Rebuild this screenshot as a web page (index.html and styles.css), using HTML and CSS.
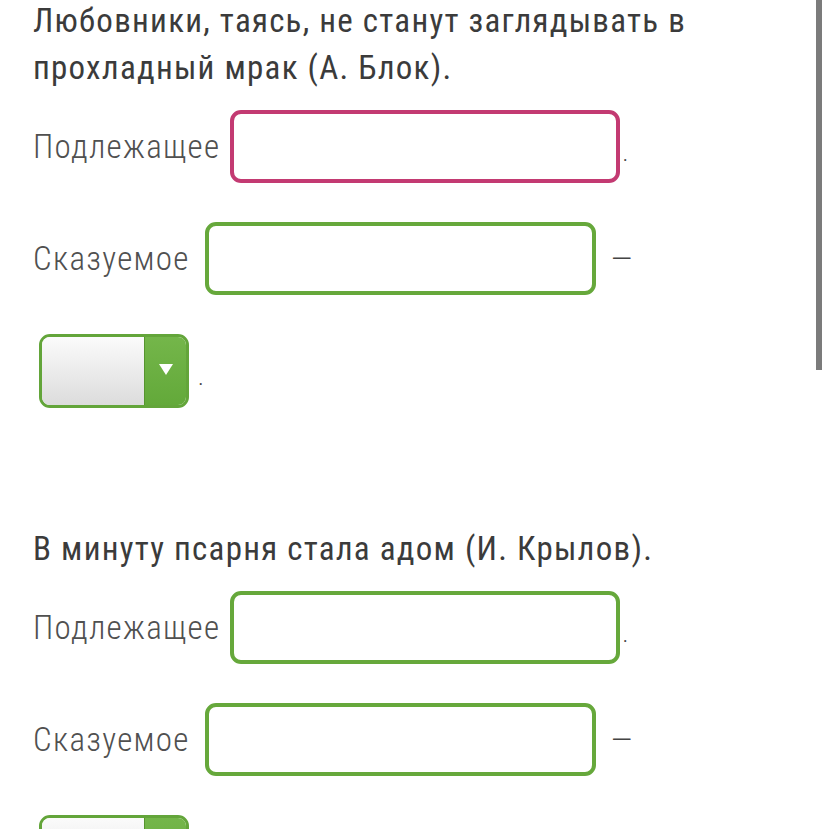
FILE: index.html
```html
<!DOCTYPE html>
<html lang="ru">
<head>
<meta charset="utf-8">
<title>Задание</title>
<link rel="stylesheet" href="styles.css">
</head>
<body>
<div class="page">
  <section class="task">
    <p class="sentence first">Любовники, таясь, не станут заглядывать в прохладный мрак (А. Блок).</p>
    <div class="row">
      <span class="label">Подлежащее</span>
      <span class="box box-pink sub"></span>
      <span class="tail dot">.</span>
    </div>
    <div class="row">
      <span class="label">Сказуемое</span>
      <span class="box pred"></span>
      <span class="tail dash">—</span>
    </div>
    <div class="row">
      <span class="select">
        <span class="select-field"></span>
        <span class="select-btn"><span class="arrow"></span></span>
      </span>
      <span class="tail sdot">.</span>
    </div>
  </section>
  <section class="task second">
    <p class="sentence">В минуту псарня стала адом (И. Крылов).</p>
    <div class="row">
      <span class="label">Подлежащее</span>
      <span class="box sub"></span>
      <span class="tail dot">.</span>
    </div>
    <div class="row">
      <span class="label">Сказуемое</span>
      <span class="box pred"></span>
      <span class="tail dash">—</span>
    </div>
    <div class="row">
      <span class="select">
        <span class="select-field"></span>
        <span class="select-btn"><span class="arrow"></span></span>
      </span>
    </div>
  </section>
</div>
<div class="scrollbar"></div>
</body>
</html>
```
FILE: styles.css
```css
html, body {
  margin: 0;
  padding: 0;
  background: #ffffff;
  overflow: hidden;
}
body {
  font-family: "Roboto Condensed", Roboto, "Liberation Sans", sans-serif;
  color: #3d3d3d;
}
.page {
  padding: 0 0 0 33px;
  margin-top: -3px;
}
.task {
  display: flex;
  flex-direction: column;
  gap: 39px;
}
.second {
  margin-top: 118px;
}
.sentence {
  margin: 0 0 -20px 0;
  font-size: 33px;
  line-height: 47px;
  font-weight: 400;
  letter-spacing: 1.25px;
  color: #3b3b3b;
  width: 700px;
}
.row {
  display: flex;
  align-items: center;
  height: 73px;
}
.label {
  font-size: 33px;
  font-weight: 300;
  letter-spacing: 1.3px;
  color: #505050;
}
.box {
  box-sizing: border-box;
  height: 73px;
  width: 390px;
  border: 4px solid #66a83b;
  border-radius: 11px;
  background: #fff;
}
.box-pink {
  border-color: #c33a72;
}
.sub { margin-left: 10px; }
.pred { margin-left: 15px; width: 391px; }
.tail {
  font-size: 33px;
  font-weight: 300;
  color: #444;
}
.dot {
  font-size: 24px;
  margin-left: 2px;
  align-self: flex-end;
  margin-bottom: 16px;
}
.dash {
  margin-left: 15px;
  font-size: 32px;
}
.select {
  box-sizing: border-box;
  display: flex;
  margin-left: 6px;
  width: 150px;
  height: 74px;
  border: 3px solid #63a53a;
  border-radius: 11px;
  overflow: hidden;
}
.select-field {
  flex: 1;
  background: linear-gradient(#fbfbfb, #dcdcdc);
}
.select-btn {
  width: 41px;
  display: flex;
  align-items: center;
  justify-content: center;
  background: linear-gradient(#74b64a, #63a93a);
  border-left: 1px solid #56952f;
}
.arrow {
  width: 0;
  height: 0;
  border-left: 7px solid transparent;
  border-right: 7px solid transparent;
  border-top: 11px solid #ffffff;
  margin-top: -2px;
}
.sdot {
  font-size: 24px;
  margin-left: 9px;
  align-self: flex-end;
  margin-bottom: 16px;
}
.scrollbar {
  position: fixed;
  top: 0;
  left: 816px;
  width: 6px;
  height: 370px;
  background: #7b7b7b;
}
```
